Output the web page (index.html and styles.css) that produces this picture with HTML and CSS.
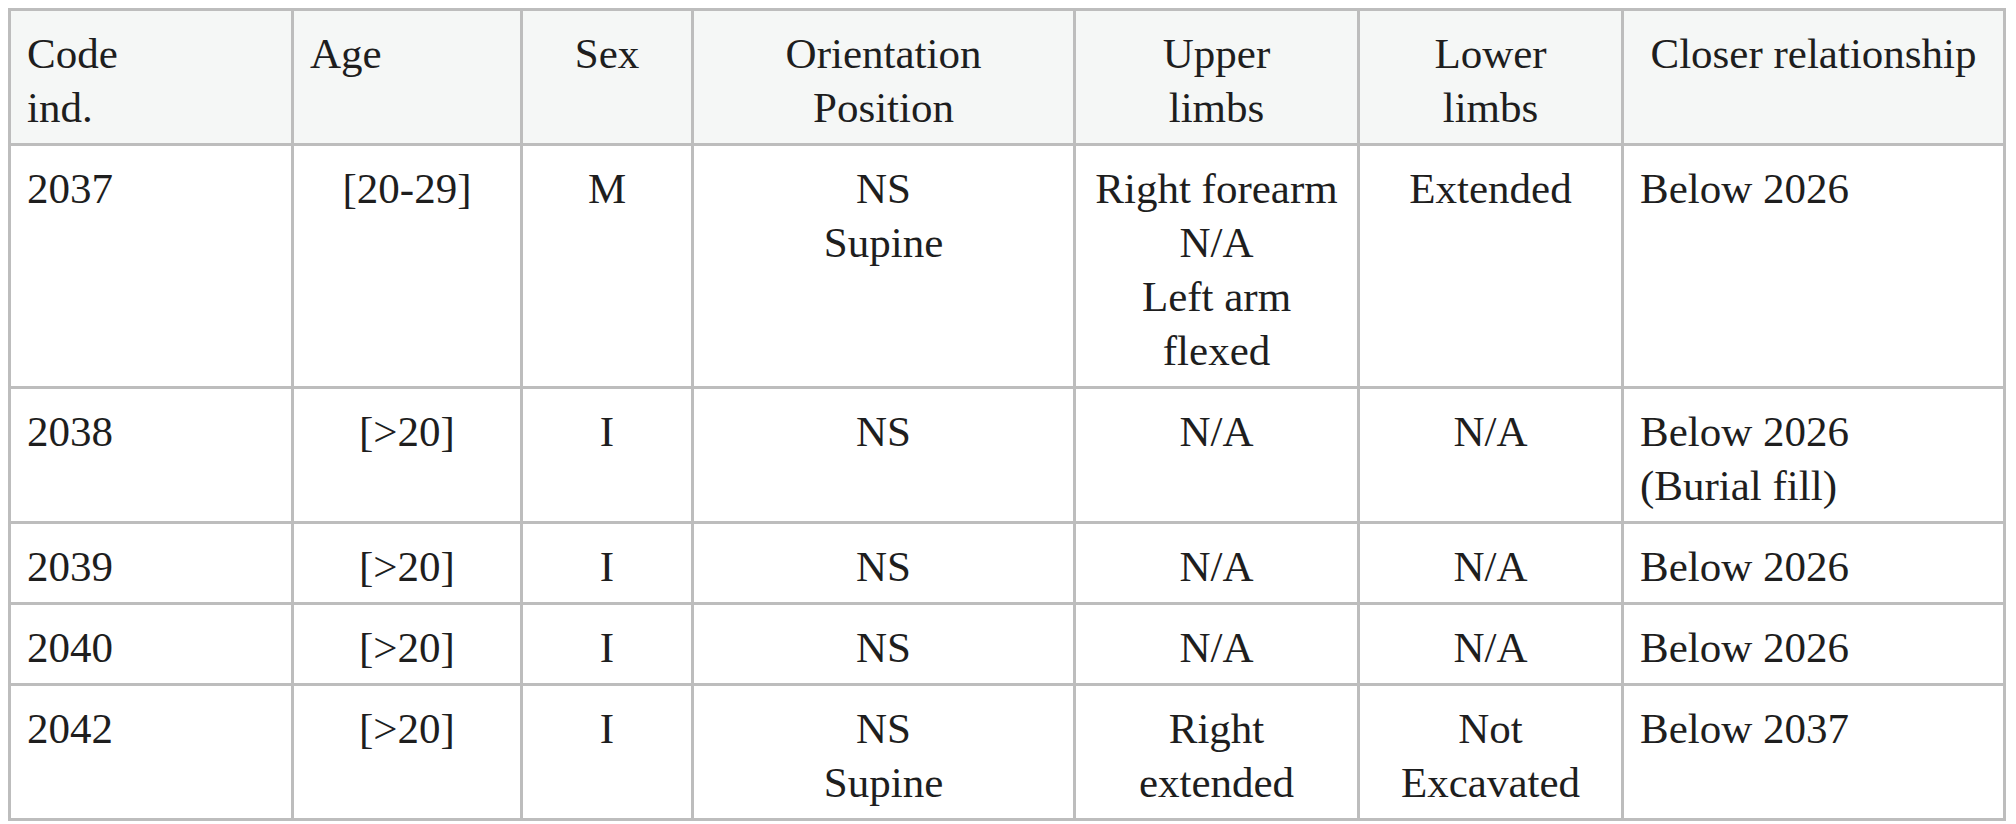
FILE: index.html
```html
<!DOCTYPE html>
<html lang="en">
<head>
<meta charset="utf-8">
<title>Burials table</title>
<link rel="stylesheet" href="styles.css">
</head>
<body>
<table class="burials">
  <colgroup>
    <col class="c-code">
    <col class="c-age">
    <col class="c-sex">
    <col class="c-orient">
    <col class="c-upper">
    <col class="c-lower">
    <col class="c-rel">
  </colgroup>
  <thead>
    <tr>
      <th class="left">Code<br>ind.</th>
      <th class="left">Age</th>
      <th>Sex</th>
      <th>Orientation<br>Position</th>
      <th>Upper<br>limbs</th>
      <th>Lower<br>limbs</th>
      <th>Closer relationship</th>
    </tr>
  </thead>
  <tbody>
    <tr>
      <td class="left">2037</td>
      <td>[20-29]</td>
      <td>M</td>
      <td>NS<br>Supine</td>
      <td>Right forearm<br>N/A<br>Left arm<br>flexed</td>
      <td>Extended</td>
      <td class="left">Below 2026</td>
    </tr>
    <tr>
      <td class="left">2038</td>
      <td>[&gt;20]</td>
      <td>I</td>
      <td>NS</td>
      <td>N/A</td>
      <td>N/A</td>
      <td class="left">Below 2026<br>(Burial fill)</td>
    </tr>
    <tr>
      <td class="left">2039</td>
      <td>[&gt;20]</td>
      <td>I</td>
      <td>NS</td>
      <td>N/A</td>
      <td>N/A</td>
      <td class="left">Below 2026</td>
    </tr>
    <tr>
      <td class="left">2040</td>
      <td>[&gt;20]</td>
      <td>I</td>
      <td>NS</td>
      <td>N/A</td>
      <td>N/A</td>
      <td class="left">Below 2026</td>
    </tr>
    <tr>
      <td class="left">2042</td>
      <td>[&gt;20]</td>
      <td>I</td>
      <td>NS<br>Supine</td>
      <td>Right<br>extended</td>
      <td>Not<br>Excavated</td>
      <td class="left">Below 2037</td>
    </tr>
  </tbody>
</table>
</body>
</html>
```
FILE: styles.css
```css
html, body {
  background: #ffffff;
}
body {
  margin: 8px;
  font-family: "Liberation Serif", "Times New Roman", serif;
  color: #1e1e1e;
}
.burials {
  border-collapse: collapse;
  table-layout: fixed;
  width: 1995px;
  font-size: 43px;
  line-height: 54px;
}
.c-code { width: 283px; }
.c-age { width: 229px; }
.c-sex { width: 171px; }
.c-orient { width: 382px; }
.c-upper { width: 284px; }
.c-lower { width: 264px; }
.c-rel { width: 382px; }
.burials th,
.burials td {
  border: 3px solid #bdbdbd;
  padding: 16px 16px 8px;
  vertical-align: top;
  text-align: center;
  white-space: nowrap;
  font-weight: normal;
}
.burials th {
  background: #f5f7f6;
}
.burials .left {
  text-align: left;
}
```
